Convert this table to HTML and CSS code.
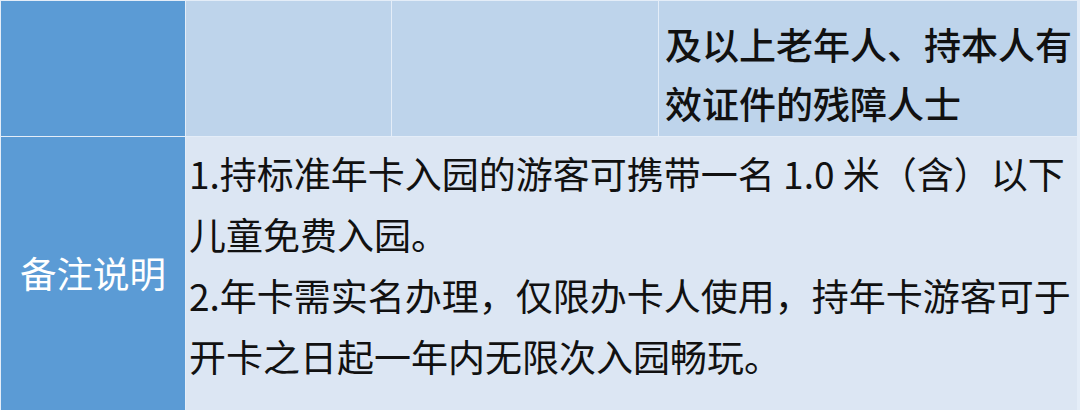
FILE: index.html
```html
<!DOCTYPE html>
<html lang="zh-CN">
<head>
<meta charset="utf-8">
<link rel="stylesheet" href="styles.css">
</head>
<body>
<div class="table">
  <div class="cell head"></div>
  <div class="cell light"></div>
  <div class="cell light"></div>
  <div class="cell light text-top">
    <span class="line">及以上老年人、持本人有</span>
    <span class="line">效证件的残障人士</span>
  </div>
  <div class="cell head label">备注说明</div>
  <div class="cell pale note">
    <span class="line">1.持标准年卡入园的游客可携带一名 1.0 米（含）以下</span>
    <span class="line">儿童免费入园。</span>
    <span class="line">2.年卡需实名办理，仅限办卡人使用，持年卡游客可于</span>
    <span class="line">开卡之日起一年内无限次入园畅玩。</span>
  </div>
</div>
</body>
</html>
```
FILE: styles.css
```css
html, body {
  margin: 0;
  padding: 0;
  width: 1080px;
  height: 410px;
  overflow: hidden;
  background: #e6eef8;
}

.table {
  box-sizing: border-box;
  width: 1080px;
  height: 410px;
  padding: 1px 3px 0 1px;
  display: grid;
  grid-template-columns: 184px 205px 266px 1fr;
  grid-template-rows: 135px 1fr;
  gap: 1px;
  background: #e4edf8;
  font-family: "Noto Sans CJK SC", "Noto Sans", sans-serif;
  color: #111;
}

.cell {
  min-width: 0;
}

.head {
  background: #5b9bd5;
}

.light {
  background: #bed4eb;
}

.pale {
  background: #dce6f3;
}

.line {
  display: block;
  white-space: nowrap;
}

.text-top {
  font-size: 37px;
  font-weight: 500;
  line-height: 59px;
  padding: 14px 0 0 6px;
}

.label {
  display: flex;
  align-items: center;
  justify-content: center;
  color: #ffffff;
  font-size: 36.5px;
  padding-bottom: 2px;
}

.note {
  grid-column: 2 / 5;
  font-size: 37px;
  line-height: 61px;
  padding: 6px 0 0 3px;
}
```
